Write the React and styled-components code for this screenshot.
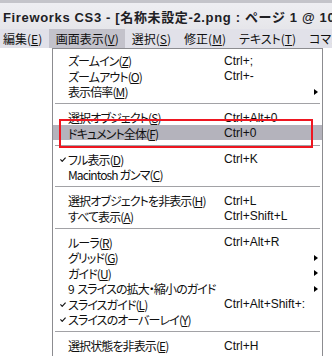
import React from "react";
import styled, { createGlobalStyle } from "styled-components";

const GlobalStyle = createGlobalStyle`
  html, body { margin: 0; padding: 0; background: #ffffff; }
  body { font-family: "Liberation Sans", "Noto Sans CJK JP", sans-serif; }
`;

const Window = styled.div`
  position: relative;
  width: 332px;
  height: 356px;
  overflow: hidden;
  background: #ffffff;
`;

const TitleBar = styled.div`
  height: 26px;
  border-top: 3px solid #c4c4ca;
  background: linear-gradient(#eeeef2, #e6e6ea);
  display: flex;
  align-items: center;
  padding-left: 3px;
  white-space: nowrap;
  overflow: hidden;
  font-family: "Liberation Sans", "Noto Sans CJK JP", sans-serif;
  font-weight: bold;
  font-size: 13px;
  letter-spacing: 0.65px;
  color: #202024;
`;

const MenuBar = styled.div`
  height: 19px;
  background: #e1e1e9;
  display: flex;
  align-items: stretch;
  overflow: hidden;
  font-family: "Noto Sans CJK JP", sans-serif;
  font-size: 12px;
  color: #101010;
`;

const MenuTitle = styled.div`
  display: flex;
  align-items: center;
  padding: ${(p) => (p.$first ? "0 7px 0 3px" : "0 6.5px")};
  background: ${(p) => (p.$active ? "#c3c2cb" : "transparent")};
  white-space: nowrap;
  font-feature-settings: "palt";
`;

const Content = styled.div`
  display: flex;
  padding-left: 52px;
`;

const Menu = styled.div`
  width: 269px;
  border: 1px solid #8c8c90;
  background: #ffffff;
  padding: 3px 0 3px;
  font-size: 12px;
  color: #101010;
`;

const Row = styled.div`
  height: 15.5px;
  display: grid;
  grid-template-columns: 15px 156px 1fr 8px;
  align-items: center;
  background: ${(p) => (p.$active ? "#b4b3bc" : "transparent")};
  white-space: pre;
`;

const Label = styled.span`
  font-family: "Noto Sans CJK JP", sans-serif;
  font-feature-settings: "palt";
  font-size: 12px;
  letter-spacing: -0.9px;
`;

const Shortcut = styled.span`
  font-family: "Liberation Sans", sans-serif;
  font-size: 12px;
`;

const CheckCell = styled.span`
  display: flex;
  justify-content: flex-end;
  padding-right: 2px;
`;

const ArrowCell = styled.span`
  display: flex;
  align-items: center;
`;

const Arrow = styled.span`
  width: 0;
  height: 0;
  border-top: 3.5px solid transparent;
  border-bottom: 3.5px solid transparent;
  border-left: 4px solid #000;
`;

const Separator = styled.div`
  height: 10.5px;
  display: flex;
  align-items: center;
  padding: 0 2px;
  &::after {
    content: "";
    flex: 1;
    height: 1px;
    background: #a2a2a6;
  }
`;

const Highlight = styled.div`
  position: absolute;
  left: 59px;
  top: 119px;
  width: 250px;
  height: 25px;
  border: 2px solid #ee1620;
  pointer-events: none;
`;

const Mn = ({ k }) => (
  <>
    (<u>{k}</u>)
  </>
);

const Check = () => (
  <svg width="6" height="5" viewBox="0 0 6 5">
    <path d="M0.4 2.4 L2.2 4.3 L5.6 0.6" fill="none" stroke="#111" strokeWidth="1.2" />
  </svg>
);

const items = [
  { label: "ズームイン", k: "Z", sc: "Ctrl+;" },
  { label: "ズームアウト", k: "O", sc: "Ctrl+-" },
  { label: "表示倍率", k: "M", sub: true },
  { sep: true },
  { label: "選択オブジェクト", k: "S", sc: "Ctrl+Alt+0" },
  { label: "ドキュメント全体", k: "F", sc: "Ctrl+0", active: true },
  { sep: true },
  { label: "フル表示", k: "D", sc: "Ctrl+K", checked: true },
  { label: "Macintosh ガンマ", k: "C" },
  { sep: true },
  { label: "選択オブジェクトを非表示", k: "H", sc: "Ctrl+L" },
  { label: "すべて表示", k: "A", sc: "Ctrl+Shift+L" },
  { sep: true },
  { label: "ルーラ", k: "R", sc: "Ctrl+Alt+R" },
  { label: "グリッド", k: "G", sub: true },
  { label: "ガイド", k: "U", sub: true },
  { label: "9  スライスの拡大・縮小のガイド", sub: true },
  { label: "スライスガイド", k: "L", sc: "Ctrl+Alt+Shift+:", checked: true },
  { label: "スライスのオーバーレイ", k: "Y", checked: true },
  { sep: true },
  { label: "選択状態を非表示", k: "E", sc: "Ctrl+H" },
];

const menus = [
  { label: "編集", k: "E" },
  { label: "画面表示", k: "V", active: true },
  { label: "選択", k: "S" },
  { label: "修正", k: "M" },
  { label: "テキスト", k: "T" },
  { label: "コマンド", k: "C" },
];

export default function App() {
  return (
    <>
      <GlobalStyle />
      <Window>
        <TitleBar>Fireworks CS3 - [名称未設定-2.png : ページ 1 @ 100%]</TitleBar>
        <MenuBar>
          {menus.map((m, i) => (
            <MenuTitle key={i} $first={i === 0} $active={m.active}>
              {m.label}
              <Mn k={m.k} />
            </MenuTitle>
          ))}
        </MenuBar>
        <Content>
          <Menu>
            {items.map((it, i) =>
              it.sep ? (
                <Separator key={i} />
              ) : (
                <Row key={i} $active={it.active}>
                  <CheckCell>{it.checked && <Check />}</CheckCell>
                  <Label>
                    {it.label}
                    {it.k && <Mn k={it.k} />}
                  </Label>
                  <Shortcut>{it.sc}</Shortcut>
                  <ArrowCell>{it.sub && <Arrow />}</ArrowCell>
                </Row>
              )
            )}
          </Menu>
        </Content>
        <Highlight />
      </Window>
    </>
  );
}
